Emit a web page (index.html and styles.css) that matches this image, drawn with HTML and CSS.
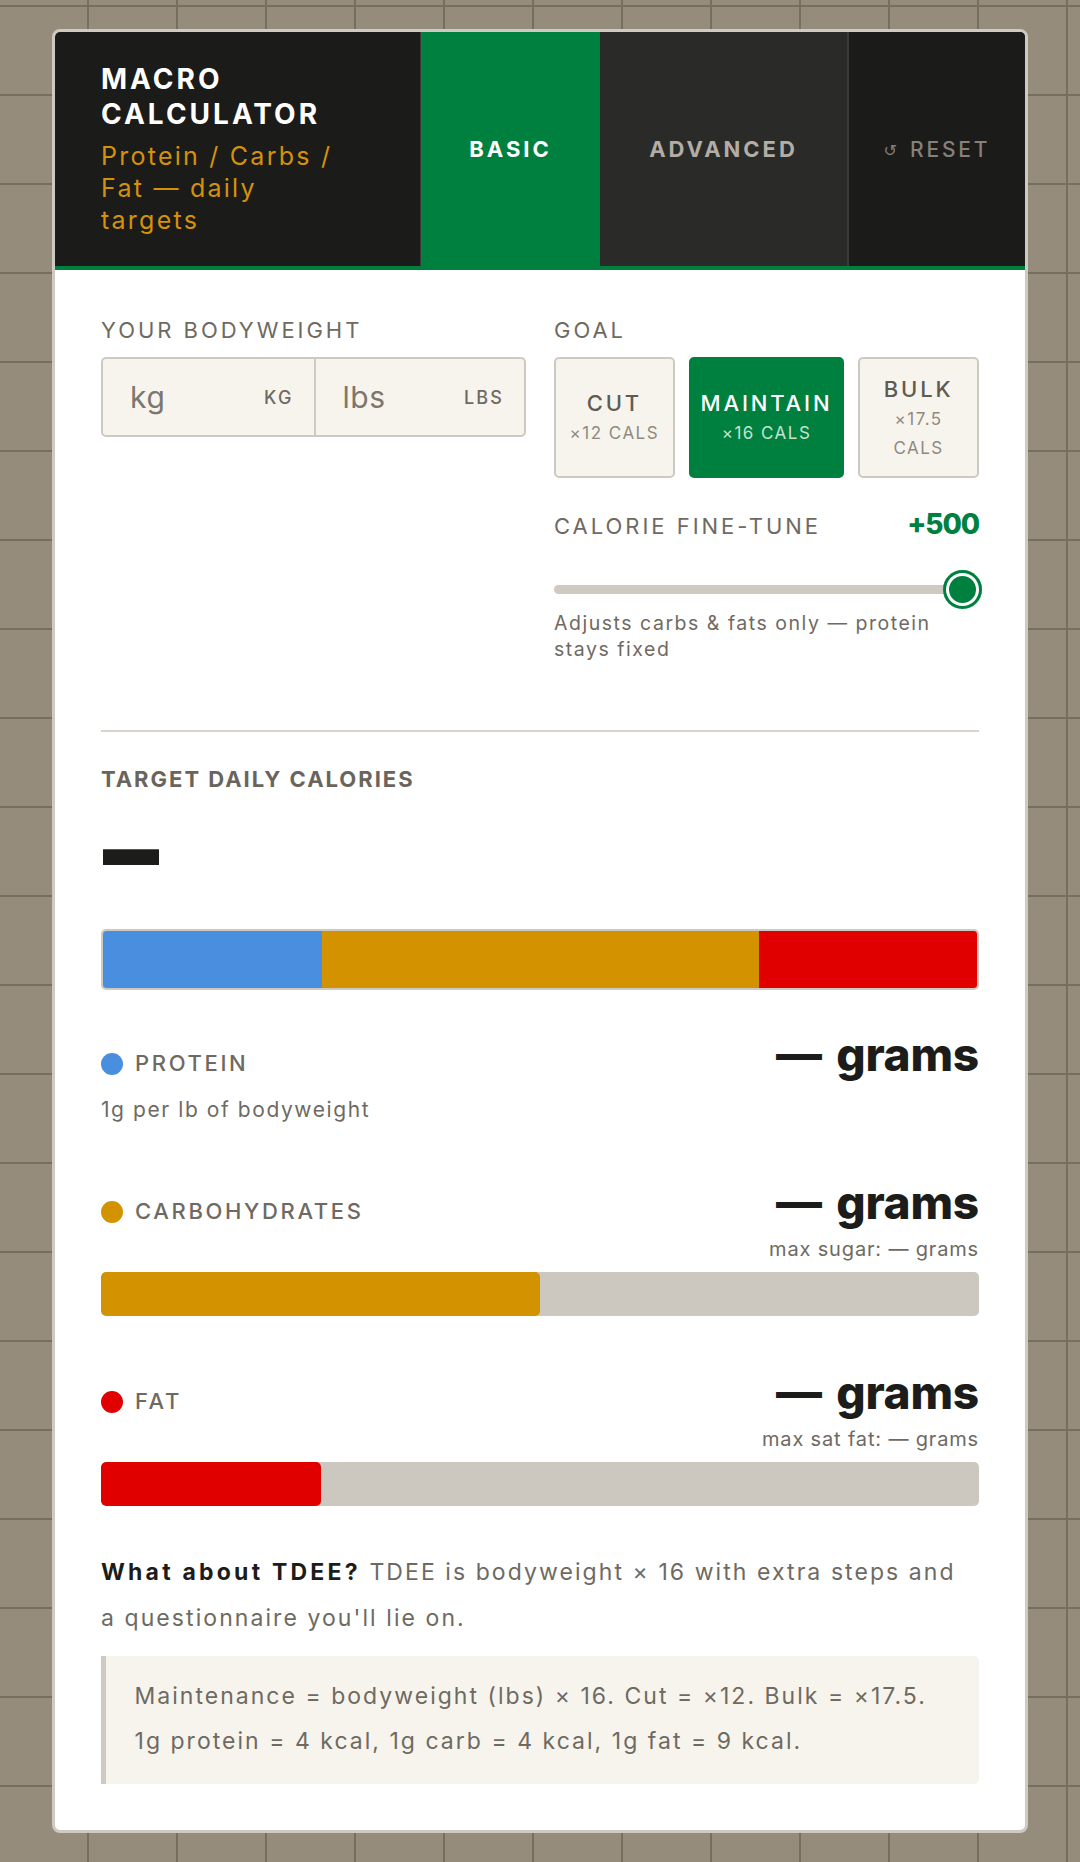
FILE: index.html
```html
<!DOCTYPE html>
<html lang="en">
<head>
<meta charset="utf-8">
<title>Macro Calculator</title>
<link rel="stylesheet" href="styles.css">
</head>
<body>
<div class="card">
  <header class="hdr">
    <div class="brand">
      <div class="brand-title">MACRO CALCULATOR</div>
      <div class="brand-sub">Protein / Carbs / Fat — daily targets</div>
    </div>
    <div class="tab active">BASIC</div>
    <div class="tab adv">ADVANCED</div>
    <div class="tab reset"><span class="reset-ico">↺</span>RESET</div>
  </header>

  <main class="body">
    <section class="top">
      <div class="col">
        <div class="label">YOUR BODYWEIGHT</div>
        <div class="weight">
          <div class="wfield"><span class="ph">kg</span><span class="unit">KG</span></div>
          <div class="wfield"><span class="ph">lbs</span><span class="unit">LBS</span></div>
        </div>
      </div>
      <div class="col">
        <div class="label">GOAL</div>
        <div class="goals">
          <div class="goal"><div class="goal-name">CUT</div><div class="goal-mult">×12 CALS</div></div>
          <div class="goal on"><div class="goal-name">MAINTAIN</div><div class="goal-mult">×16 CALS</div></div>
          <div class="goal"><div class="goal-name">BULK</div><div class="goal-mult">×17.5 CALS</div></div>
        </div>
        <div class="tune-head"><span class="label">CALORIE FINE-TUNE</span><span class="tune-val">+500</span></div>
        <div class="slider"><div class="track"></div><div class="thumb"></div></div>
        <p class="hint">Adjusts carbs &amp; fats only — protein stays fixed</p>
      </div>
    </section>

    <hr class="divider">

    <div class="label strong">TARGET DAILY CALORIES</div>
    <div class="big"><span class="big-dash">—</span></div>

    <div class="stack">
      <div class="seg p" style="width:25%"></div>
      <div class="seg c" style="width:50%"></div>
      <div class="seg f" style="width:25%"></div>
    </div>

    <div class="macro first">
      <div class="mhead">
        <div class="mname"><span class="dot p"></span>PROTEIN</div>
        <div class="grams">— grams</div>
      </div>
      <div class="msub left">1g per lb of bodyweight</div>
    </div>

    <div class="macro">
      <div class="mhead">
        <div class="mname"><span class="dot c"></span>CARBOHYDRATES</div>
        <div class="grams">— grams</div>
      </div>
      <div class="msub">max sugar: — grams</div>
      <div class="bar"><div class="fill c" style="width:50%"></div></div>
    </div>

    <div class="macro">
      <div class="mhead">
        <div class="mname"><span class="dot f"></span>FAT</div>
        <div class="grams">— grams</div>
      </div>
      <div class="msub">max sat fat: — grams</div>
      <div class="bar"><div class="fill f" style="width:25%"></div></div>
    </div>

    <p class="tdee"><strong>What about TDEE?</strong> TDEE is bodyweight × 16 with extra steps and a questionnaire you'll lie on.</p>
    <div class="note">Maintenance = bodyweight (lbs) × 16. Cut = ×12. Bulk = ×17.5. 1g protein = 4 kcal, 1g carb = 4 kcal, 1g fat = 9 kcal.</div>
  </main>
</div>
</body>
</html>
```

FILE: styles.css
```css
* { box-sizing: border-box; }
html, body { margin: 0; }
body {
  min-height: 1862px;
  padding: 29px 0 30px;
  background-color: #968c7b;
  background-image:
    linear-gradient(to right, #766e5f 0 2px, transparent 2px),
    linear-gradient(to bottom, #766e5f 0 2px, transparent 2px);
  background-size: 89px 89px;
  background-position: 87px 5px;
  font-family: Inter, "Liberation Sans", sans-serif;
  color: #6e6a62;
}
.card {
  width: 976px;
  margin: 0 auto;
  background: #fff;
  border: 3px solid #cfcac1;
  border-radius: 8px;
  overflow: hidden;
}

/* header */
.hdr {
  display: grid;
  grid-template-columns: 1fr 179px 247px 178px;
  background: #1b1b1a;
  border-bottom: 4px solid #00803f;
}
.brand { padding: 30px 46px; border-right: 1px solid #3a3a38; }
.brand-title {
  font-size: 28px; line-height: 35.3px; font-weight: 700;
  letter-spacing: .107em; color: #fff;
}
.brand-sub {
  margin-top: 7px; max-width: 240px;
  font-size: 25px; line-height: 32.2px; letter-spacing: .09em; color: #d4920a;
}
.tab {
  display: flex; align-items: center; justify-content: center;
  font-size: 22px; font-weight: 700; letter-spacing: .135em;
}
.tab.active { background: #00803f; color: #fff; }
.tab.adv { background: #2a2a29; color: #b2aea6; }
.tab.reset { background: #1b1b1a; color: #85817a; font-weight: 500; font-size: 21px; border-left: 2px solid #3b3b39; }
.reset-ico { font-family: "DejaVu Sans", sans-serif; font-size: 16px; margin: 3px 13px 0 0; letter-spacing: 0; }

/* body */
.body { padding: 46px; }
.top { display: grid; grid-template-columns: 1fr 1fr; column-gap: 28px; align-items: start; }
.label { font-size: 22px; line-height: 28.6px; letter-spacing: .135em; }
.col > .label { margin-bottom: 12.5px; }
.weight {
  display: grid; grid-template-columns: 1fr 1fr; height: 80px;
  border: 2px solid #cfcac1; border-radius: 5px; background: #f7f4ee;
}
.wfield { display: flex; align-items: center; justify-content: space-between; padding: 0 20px 0 27px; }
.wfield + .wfield { border-left: 2px solid #cfcac1; }
.ph { font-size: 30px; letter-spacing: .02em; color: #7b776f; }
.unit { font-size: 18px; font-weight: 500; letter-spacing: .12em; color: #6e6a62; }

.goals {
  display: grid; height: 121px; column-gap: 14px;
  grid-template-columns: minmax(0, 121fr) minmax(0, 156fr) minmax(0, 121fr);
}
.goal {
  display: flex; flex-direction: column; align-items: center; justify-content: center;
  min-width: 0; padding: 0 12px; text-align: center;
  border: 2px solid #cfcac1; border-radius: 5px; background: #f7f4ee;
}
.goal-name { font-size: 22px; line-height: 32px; font-weight: 500; letter-spacing: .13em; color: #5f5b53; white-space: nowrap; }
.goal-mult { font-size: 17px; line-height: 29px; letter-spacing: .087em; color: #8f8a81; }
.goal.on { background: #00803f; border-color: #00803f; }
.goal.on .goal-name { color: #fff; }
.goal.on .goal-mult { color: #c4e3cf; }

.tune-head { display: flex; justify-content: space-between; align-items: baseline; margin-top: 28px; line-height: 36px; }
.tune-val { font-size: 28px; font-weight: 800; letter-spacing: -.04em; color: #00803f; }
.slider { position: relative; display: flex; align-items: center; height: 39px; margin-top: 27.5px; }
.track { flex: 1; height: 9px; border-radius: 5px; background: #cfcac1; }
.thumb {
  position: absolute; right: -3px; top: 0; width: 39px; height: 39px; border-radius: 50%;
  background: #00803f; box-shadow: inset 0 0 0 3px #00803f, inset 0 0 0 6px #fff;
}
.hint { margin: 1px 0 0; max-width: 395px; font-size: 19.5px; line-height: 26px; letter-spacing: .078em; }

.divider { border: 0; border-top: 2px solid #d9d5cc; margin: 68.5px 0 33px; }
.label.strong { font-weight: 700; letter-spacing: .09em; color: #69655d; }
.big { margin-top: 18.5px; height: 73.7px; padding-left: 2px; font-size: 56px; line-height: 73.7px; font-weight: 900; color: #1c1c1a; }
.big-dash { display: inline-block; transform: translateY(6px) scaleY(1.9); transform-origin: 50% 55%; }

.stack {
  display: flex; height: 61px; margin-top: 43px; overflow: hidden;
  border: 2px solid #cfcac1; border-radius: 5px;
}
.seg.p, .dot.p { background: #4a8fdf; }
.seg.c, .dot.c, .fill.c { background: #d39200; }
.seg.f, .dot.f, .fill.f { background: #e00000; }

.macro { margin-top: 51px; }
.macro.first { margin-top: 38.6px; }
.mhead { display: flex; justify-content: space-between; align-items: baseline; }
.mname { font-size: 22px; font-weight: 500; letter-spacing: .12em; }
.dot { display: inline-block; width: 22px; height: 22px; border-radius: 50%; margin-right: 12px; vertical-align: -4px; }
.grams { font-size: 46px; line-height: 50.6px; font-weight: 800; letter-spacing: -.005em; word-spacing: .1em; color: #1c1c1a; }
.msub { margin-top: 7px; font-size: 20px; line-height: 30px; letter-spacing: .042em; text-align: right; }
.msub.left { margin-top: 15px; font-size: 21px; line-height: 31.5px; letter-spacing: .075em; text-align: left; }
.bar { height: 43.5px; margin-top: 8px; border-radius: 5px; background: #ccc7bf; overflow: hidden; }
.fill { height: 100%; border-radius: 5px; }

.tdee { max-width: 872px; margin: 44.3px 0 0; font-size: 23px; line-height: 45.6px; letter-spacing: .09em; }
.tdee strong { color: #1c1c1a; font-weight: 700; letter-spacing: .14em; }
.note {
  margin-top: 15px; padding: 17.5px 30px 20.5px 28.5px;
  background: #f7f4ee; border-left: 5px solid #cfcac1; border-radius: 0 5px 5px 0;
  font-size: 23px; line-height: 45px; letter-spacing: .088em;
}
```
